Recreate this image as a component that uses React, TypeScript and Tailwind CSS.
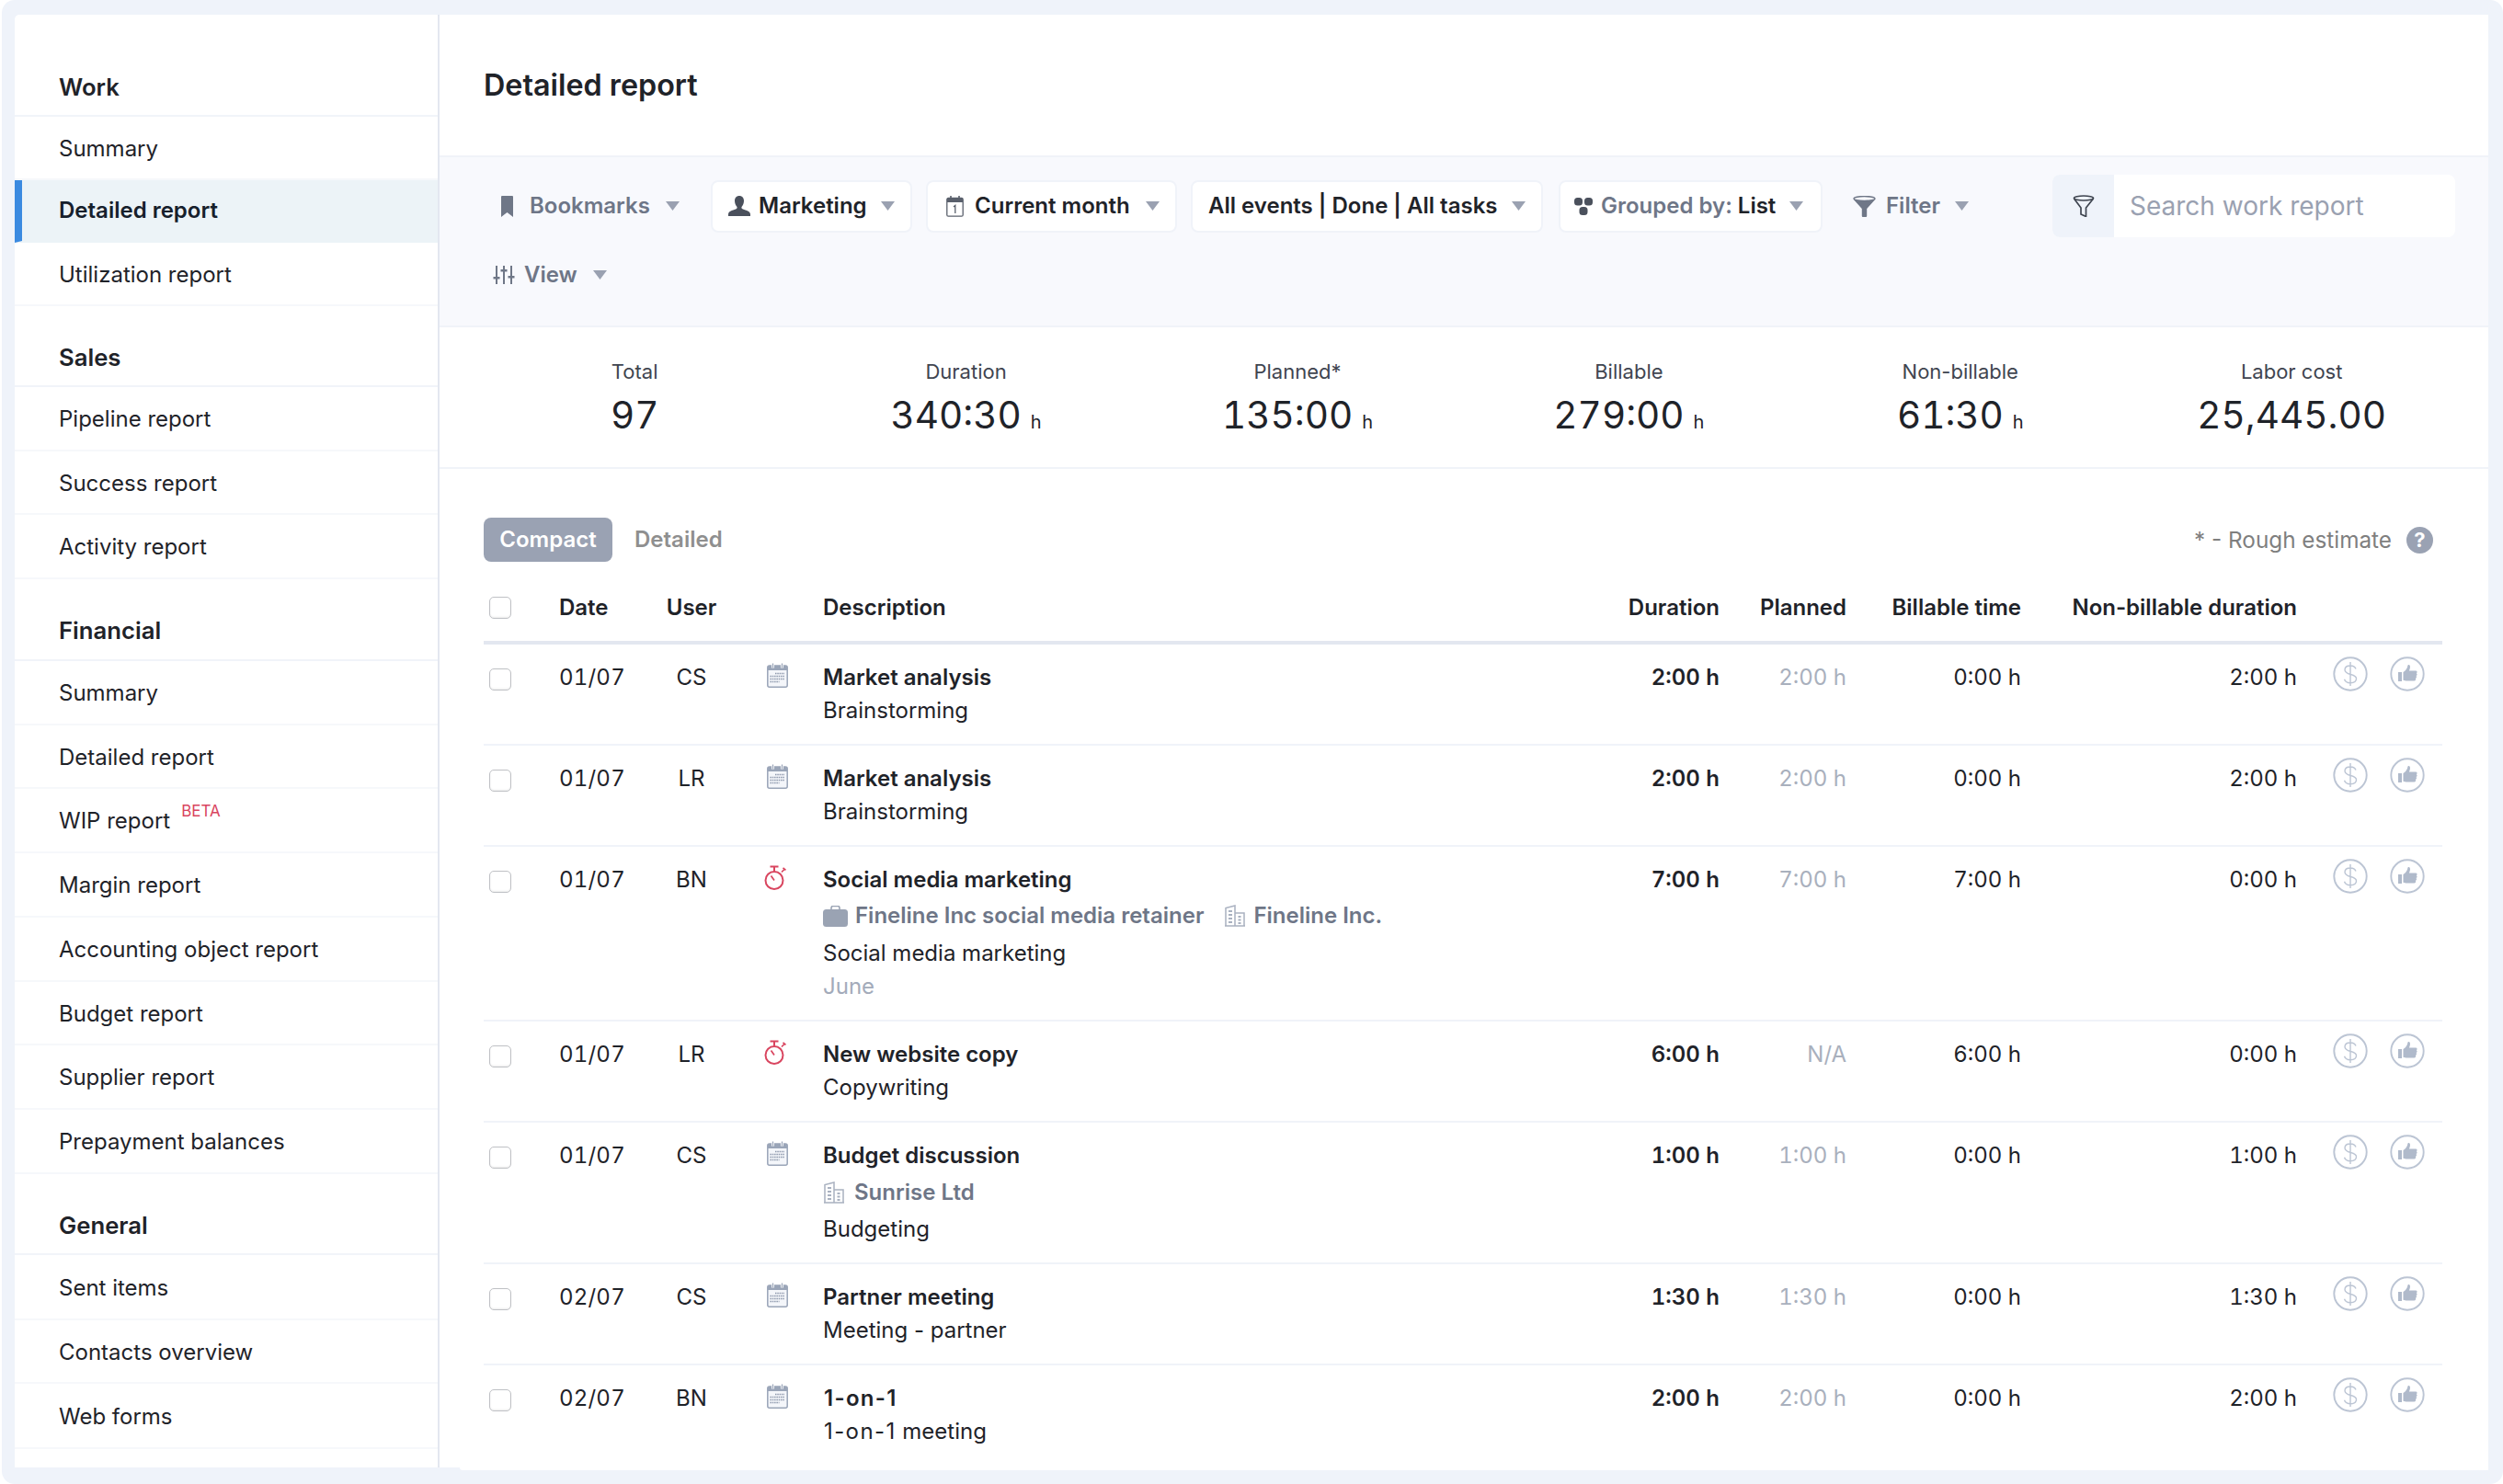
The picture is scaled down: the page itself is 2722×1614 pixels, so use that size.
import React from "react";

const Arrow = ({ cls = "" }: { cls?: string }) => (
  <svg width="15" height="10" viewBox="0 0 15 10" className={cls}>
    <path d="M0 0h15L7.5 10z" fill="#9aa1b1" />
  </svg>
);

const CalIcon = () => (
  <svg width="23" height="27" viewBox="0 0 23 27">
    <rect x="0.8" y="3" width="21.4" height="23.2" rx="2" fill="#f4f6fa" stroke="#9aa5b8" strokeWidth="1.5" />
    <path d="M1 5a2 2 0 0 1 2-2h17a2 2 0 0 1 2 2v3H1z" fill="#9aa5b8" />
    <path d="M6.5 0.5v5M16.5 0.5v5" stroke="#fff" strokeWidth="3" />
    <path d="M6.5 0.5v5M16.5 0.5v5" stroke="#9aa5b8" strokeWidth="1.3" />
    <path d="M9 11.5h10M3.5 14.5h15.5M3.5 17.5h15.5M3.5 20.5h10" stroke="#8d98ac" strokeWidth="1.3" strokeDasharray="1.5 0.8" />
  </svg>
);

const Watch = () => (
  <svg width="25" height="27" viewBox="0 0 25 27" fill="none" stroke="#d9455f" strokeWidth="2">
    <circle cx="11" cy="16.5" r="9.5" />
    <path d="M6.5 1.5h9M11 1.5v5" />
    <path d="M19 7.5l3-3M20.5 2.8l3 2.5" strokeWidth="1.7" />
    <path d="M7.5 11.5l3.5 5" strokeWidth="1.7" />
  </svg>
);

const Brief = () => (
  <svg width="27" height="23" viewBox="0 0 27 23">
    <path d="M9 5V2.500A2 2 0 0 1 11 .5h5a2 2 0 0 1 2 2V5" fill="none" stroke="#9aa3b3" strokeWidth="1.6" />
    <rect y="4" width="27" height="19" rx="3.5" fill="#9aa3b3" />
  </svg>
);

const Building = () => (
  <svg width="22" height="24" viewBox="0 0 22 24" fill="none" stroke="#a9b1c0" strokeWidth="1.5">
    <path d="M1 23V3.500L11 1v22zM11 9h10v14M0 23h22" />
    <path d="M4 7h4M4 11h4M4 15h4M4 19h4M14.500 13h3M14.500 16.500h3M14.500 20h3" strokeWidth="1.8" />
  </svg>
);

const Actions = () => (
  <div className="flex gap-[24px] ml-[39px] mt-[-5px]">
    <svg width="38" height="38" viewBox="0 0 38 38" fill="none" stroke="#bcc5d4">
      <circle cx="19" cy="19" r="17.7" strokeWidth="1.9" />
      <path d="M25 13.500c-1-2.500-3.300-3.500-6-3.500-3.500 0-6 1.800-6 4.500 0 6.500 12.500 3.500 12.500 9.500 0 3-2.800 4.700-6.500 4.700-3 0-5.500-1.200-6.500-4M19 6v26" strokeWidth="1.4" />
    </svg>
    <svg width="38" height="38" viewBox="0 0 38 38" fill="none">
      <circle cx="19" cy="19" r="17.7" stroke="#bcc5d4" strokeWidth="1.9" />
      <path d="M9 17h4v10H9zM14.500 17c2.500-1.500 4.500-4 5-7.500 0-1 2.500-1 2.500 1.500 0 2-.8 3.500-1 4.500h7c2 0 2 2.200.8 2.700 1.200.6 1 2.500-.3 2.800.9.800.6 2.500-.5 2.800.5 1-.1 2.700-1.500 2.700h-8c-1.500 0-2.500-.5-4-.8z" fill="#b0bacb" />
    </svg>
  </div>
);

type Row = {
  h: string; date: string; user: string; icon: "cal" | "watch"; title: React.ReactNode;
  extra?: React.ReactNode; dur: string; plan: string; bill: string; non: string;
};

const rows: Row[] = [
  { h: "h-[110px]", date: "01/07", user: "CS", icon: "cal", title: "Market analysis", extra: <div className="leading-[36px]">Brainstorming</div>, dur: "2:00 h", plan: "2:00 h", bill: "0:00 h", non: "2:00 h" },
  { h: "h-[110px]", date: "01/07", user: "LR", icon: "cal", title: "Market analysis", extra: <div className="leading-[36px]">Brainstorming</div>, dur: "2:00 h", plan: "2:00 h", bill: "0:00 h", non: "2:00 h" },
  {
    h: "h-[190px]", date: "01/07", user: "BN", icon: "watch", title: "Social media marketing",
    extra: (
      <>
        <div className="flex items-center h-[36px] mt-[3px] font-semibold text-[#6e7687]">
          <Brief />
          <span className="ml-[8px]">Fineline Inc social media retainer</span>
          <span className="ml-[23px]"><Building /></span>
          <span className="ml-[9px]">Fineline Inc.</span>
        </div>
        <div className="leading-[36px] mt-[5px]">Social media marketing</div>
        <div className="leading-[36px] text-[#a3abba]">June</div>
      </>
    ),
    dur: "7:00 h", plan: "7:00 h", bill: "7:00 h", non: "0:00 h",
  },
  { h: "h-[110px]", date: "01/07", user: "LR", icon: "watch", title: "New website copy", extra: <div className="leading-[36px]">Copywriting</div>, dur: "6:00 h", plan: "N/A", bill: "6:00 h", non: "0:00 h" },
  {
    h: "h-[154px]", date: "01/07", user: "CS", icon: "cal", title: "Budget discussion",
    extra: (
      <>
        <div className="flex items-center h-[36px] mt-[4px] pl-[1px] font-semibold text-[#6e7687]">
          <Building />
          <span className="ml-[11px]">Sunrise Ltd</span>
        </div>
        <div className="leading-[36px] mt-[4px]">Budgeting</div>
      </>
    ),
    dur: "1:00 h", plan: "1:00 h", bill: "0:00 h", non: "1:00 h",
  },
  { h: "h-[110px]", date: "02/07", user: "CS", icon: "cal", title: "Partner meeting", extra: <div className="leading-[36px]">Meeting - partner</div>, dur: "1:30 h", plan: "1:30 h", bill: "0:00 h", non: "1:30 h" },
  {
    h: "h-[115px]", date: "02/07", user: "BN", icon: "cal",
    title: <span className="ml-[1px] tracking-[1.3px]">1-on-1</span>,
    extra: <div className="leading-[36px] ml-[1px]"><span className="tracking-[1.4px]">1-on-1</span> meeting</div>,
    dur: "2:00 h", plan: "2:00 h", bill: "0:00 h", non: "2:00 h",
  },
];

const Check = ({ cls }: { cls: string }) => (
  <div className={`w-[24px] h-[24px] ml-[6px] rounded-[5px] border-[1.5px] border-[#bfc1c5] bg-white shadow-[inset_0_-1px_2px_rgba(0,0,0,0.08)] ${cls}`} />
);

const COLS = "grid grid-cols-[82px_106px_76px_105px_775px_200px_138px_190px_300px_158px]";

type Item = { label: React.ReactNode; h: string; active?: boolean };
type Section = { title: string; h: string; items: Item[] };

const sections: Section[] = [
  {
    title: "Work", h: "h-[111px] pb-[10px]",
    items: [
      { label: "Summary", h: "h-[69px]" },
      { label: "Detailed report", h: "h-[68px]", active: true },
      { label: "Utilization report", h: "h-[69px]" },
    ],
  },
  {
    title: "Sales", h: "h-[88px] pb-[10px]",
    items: [
      { label: "Pipeline report", h: "h-[70px]" },
      { label: "Success report", h: "h-[69px]" },
      { label: "Activity report", h: "h-[70px]" },
    ],
  },
  {
    title: "Financial", h: "h-[89px] pb-[11px]",
    items: [
      { label: "Summary", h: "h-[70px]" },
      { label: "Detailed report", h: "h-[69px]" },
      { label: <>WIP report<sup className="ml-[12px] text-[17px] text-[#d9455f] relative top-[-13px]">BETA</sup></>, h: "h-[70px]" },
      { label: "Margin report", h: "h-[70px]" },
      { label: "Accounting object report", h: "h-[70px]" },
      { label: "Budget report", h: "h-[69px]" },
      { label: "Supplier report", h: "h-[70px]" },
      { label: "Prepayment balances", h: "h-[70px]" },
    ],
  },
  {
    title: "General", h: "h-[88px] pb-[10px]",
    items: [
      { label: "Sent items", h: "h-[71px]" },
      { label: "Contacts overview", h: "h-[69px]" },
      { label: "Web forms", h: "h-[71px]" },
    ],
  },
];

const Btn = ({ w, children, ml }: { w: string; ml: string; children: React.ReactNode }) => (
  <div className={`flex items-center h-[57px] rounded-[8px] bg-white border-2 border-[#f0f3f9] ${w} ${ml}`}>{children}</div>
);

const stats = [
  { l: "Total", v: "97" },
  { l: "Duration", v: "340:30", u: true },
  { l: "Planned*", v: "135:00", u: true },
  { l: "Billable", v: "279:00", u: true },
  { l: "Non-billable", v: "61:30", u: true },
  { l: "Labor cost", v: "25,445.00" },
];

export default function App() {
  return (
    <div className="w-[2722px] h-[1614px] bg-white overflow-hidden font-[family-name:Inter,sans-serif] text-[24px] text-[#1f2329]">
      <div className="relative ml-[2px] w-[2720px] h-[1614px] bg-[#eff3fa] rounded-[14px] pt-[16px] pl-[14px]">
        <div className="relative flex w-[2690px] h-[1580px] bg-white rounded-tl-[5px]">
          {/* sidebar */}
          <aside className="w-[462px] h-[1580px] shrink-0 border-r-2 border-[#e3e7f0] overflow-hidden">
            {sections.map((s) => (
              <div key={s.title}>
                <div className={`flex items-end pl-[48px] border-b-2 border-[#f1f4f9] text-[25.7px] font-semibold ${s.h}`}>{s.title}</div>
                {s.items.map((it, i) => (
                  <div
                    key={i}
                    className={`flex items-center border-b-2 ${it.h} ${it.active ? "bg-[#ecf3f7] border-[#ecf3f7] border-l-8 border-l-[#3b8ae0] pl-[40px] font-semibold text-[#16202c]" : "border-[#f6f8fb] pl-[48px] pt-[2px]"}`}
                  >
                    <span>{it.label}</span>
                  </div>
                ))}
              </div>
            ))}
          </aside>

          {/* main */}
          <main className="relative w-[2228px] h-[1580px]">
            <div className="absolute left-[22px] right-0 top-[1580px] h-[3px] bg-white rounded-bl-[4px]" />
            <div className="h-[153px] flex items-center pl-[48px] pt-[1px]">
              <h1 className="text-[32.3px] font-semibold leading-none">Detailed report</h1>
            </div>

            {/* toolbar */}
            <div className="h-[187px] bg-[#f8f9fd] border-y-2 border-[#f0f3f9] font-semibold text-[#6e7687]">
              <div className="flex items-center h-[68px] mt-[19px] ml-[67px]">
                <div className="flex items-center w-[228px] shrink-0">
                  <svg width="13" height="23" viewBox="0 0 13 23"><path d="M0 1a1 1 0 0 1 1-1h11a1 1 0 0 1 1 1v22l-6.500-5L0 23z" fill="#6f7787" /></svg>
                  <span className="ml-[18px]">Bookmarks</span>
                  <Arrow cls="ml-[17px]" />
                </div>
                <Btn w="w-[219px]" ml="ml-0">
                  <svg className="ml-[17px]" width="24" height="22" viewBox="0 0 24 22"><path d="M12 0c3 0 5 2.200 5 5.500 0 2.500-1 5-2.300 6.300-.4.400-.4 1.600.3 2.200C17 15.500 24 16 24 20v2H0v-2c0-4 7-4.500 9-6 .7-.6.7-1.800.3-2.200C8 10.500 7 8 7 5.500 7 2.200 9 0 12 0z" fill="#4a505c" /></svg>
                  <span className="ml-[9px] text-[#1f2329]">Marketing</span>
                  <Arrow cls="ml-auto mr-[17px]" />
                </Btn>
                <Btn w="w-[273px]" ml="ml-[15px]">
                  <svg className="ml-[20px]" width="19" height="23" viewBox="0 0 19 23" fill="none">
                    <rect x="0.8" y="2.5" width="17.4" height="19.7" rx="1.5" stroke="#5a606c" strokeWidth="1.3" />
                    <path d="M1 3.500a1 1 0 0 1 1-1h15a1 1 0 0 1 1 1V7H1z" fill="#5a606c" />
                    <path d="M5 0v4M14 0v4" stroke="#5a606c" strokeWidth="1.6" />
                    <path d="M8 12l1.800-1.500V19" stroke="#5a606c" strokeWidth="1.3" />
                  </svg>
                  <span className="ml-[12px] text-[#1f2329]">Current month</span>
                  <Arrow cls="ml-auto mr-[17px]" />
                </Btn>
                <Btn w="w-[383px]" ml="ml-[15px]">
                  <span className="ml-[17px] text-[#1f2329]">All events | Done | All tasks</span>
                  <Arrow cls="ml-auto mr-[17px]" />
                </Btn>
                <Btn w="w-[287px]" ml="ml-[17px]">
                  <svg className="ml-[15px]" width="20" height="19" viewBox="0 0 20 19" fill="#4a505c">
                    <rect width="9" height="8.5" rx="3.5" />
                    <rect x="11" width="9" height="8.5" rx="3.5" />
                    <rect x="5.5" y="10" width="9" height="9" rx="3.5" />
                  </svg>
                  <span className="ml-[9px]">Grouped by: <span className="text-[#1f2329]">List</span></span>
                  <Arrow cls="ml-auto mr-[19px]" />
                </Btn>
                <div className="flex items-center w-[217px] ml-[33px] shrink-0">
                  <svg width="25" height="23" viewBox="0 0 25 23">
                    <ellipse cx="12.5" cy="3" rx="11.5" ry="2.5" fill="none" stroke="#6f7787" strokeWidth="1.4" />
                    <path d="M0.800 4c2 2 21.400 2 23.400 0l-9 10v8a1 1 0 0 1-1 1h-3.400a1 1 0 0 1-1-1v-8z" fill="#6f7787" />
                  </svg>
                  <span className="ml-[11px]">Filter</span>
                  <Arrow cls="ml-[16px]" />
                </div>
                <div className="flex w-[438px] h-[68px] rounded-[8px] overflow-hidden bg-white">
                  <div className="flex items-center justify-center w-[67px] h-full bg-[#eff3fa]">
                    <svg width="24" height="24" viewBox="0 0 24 24" fill="none" stroke="#3f4550" strokeWidth="1.7">
                      <ellipse cx="12" cy="3.5" rx="10.5" ry="2.5" />
                      <path d="M1.500 4l7.500 10v7l5.500 2.500V14l8-10" />
                    </svg>
                  </div>
                  <span className="ml-[17px] self-center font-normal text-[28px] text-[#9aa1b1]">Search work report</span>
                </div>
              </div>
              <div className="flex items-center mt-[24px] ml-[58px] h-[34px]">
                <svg width="24" height="20" viewBox="0 0 24 20" fill="#6f7787">
                  <path d="M3 0h2v12h2.500v2.500H5V20H3v-5.500H.500V12H3zM11 0h2v4h2.500v2.500H13V20h-2V6.500H8.500V4H11zM19 0h2v11h2.500v2.500H21V20h-2v-6.500h-2.500V11H19z" />
                </svg>
                <span className="ml-[10px]">View</span>
                <Arrow cls="ml-[17px]" />
              </div>
            </div>

            {/* stats */}
            <div className="h-[154px] border-b-2 border-[#f0f3f9] pl-[32px] grid grid-cols-[repeat(6,360.4px)] text-center">
              {stats.map((s) => (
                <div key={s.l} className="pt-[32px]">
                  <div className="text-[22px] leading-[32px] text-[#3f4550]">{s.l}</div>
                  <div className="text-[40.5px] leading-[56px] mt-[4px] tabular-nums">
                    {s.v}
                    {s.u && <span className="text-[20px] ml-[10px]">h</span>}
                  </div>
                </div>
              ))}
            </div>

            {/* tabs */}
            <div className="flex items-center h-[48px] mt-[53px] ml-[48px] w-[2130px]">
              <div className="flex items-center justify-center w-[140px] h-[48px] rounded-[8px] bg-[#9aa2b3] text-white font-semibold">Compact</div>
              <div className="ml-[24px] font-semibold text-[#8f8f8f]">Detailed</div>
              <div className="ml-auto text-[24.3px] text-[#7f7f7f]">* - Rough estimate</div>
              <div className="ml-[16px] mr-[10px] w-[29px] h-[29px] rounded-full bg-[#9aa2b3] text-white font-bold text-[22px] flex items-center justify-center">?</div>
            </div>

            {/* table */}
            <div className="ml-[48px] w-[2130px]">
              <div className={`${COLS} h-[90px] items-center pt-[14px] font-semibold border-b-4 border-[#e3e7f0]`}>
                <Check cls="" />
                <div>Date</div>
                <div className="text-center">User</div>
                <div />
                <div>Description</div>
                <div className="text-right">Duration</div>
                <div className="text-right">Planned</div>
                <div className="text-right">Billable time</div>
                <div className="text-right">Non-billable duration</div>
                <div />
              </div>
              {rows.map((r, i) => (
                <div key={i} className={`${COLS} ${r.h} pt-[18px] ${i < rows.length - 1 ? "border-b-2 border-[#f0f3f9]" : ""} leading-[36px]`}>
                  <Check cls="mt-[8px]" />
                  <div className="tabular-nums tracking-[0.2px]">{r.date}</div>
                  <div className="text-center">{r.user}</div>
                  <div className="pl-[44px] mt-[2px]">{r.icon === "cal" ? <CalIcon /> : <span className="block ml-[-3px]"><Watch /></span>}</div>
                  <div>
                    <div className="font-semibold">{r.title}</div>
                    {r.extra}
                  </div>
                  <div className="text-right font-semibold tabular-nums">{r.dur}</div>
                  <div className="text-right text-[#a9b0bd] tabular-nums">{r.plan}</div>
                  <div className="text-right tabular-nums">{r.bill}</div>
                  <div className="text-right tabular-nums">{r.non}</div>
                  <Actions />
                </div>
              ))}
            </div>
          </main>
        </div>
      </div>
    </div>
  );
}
